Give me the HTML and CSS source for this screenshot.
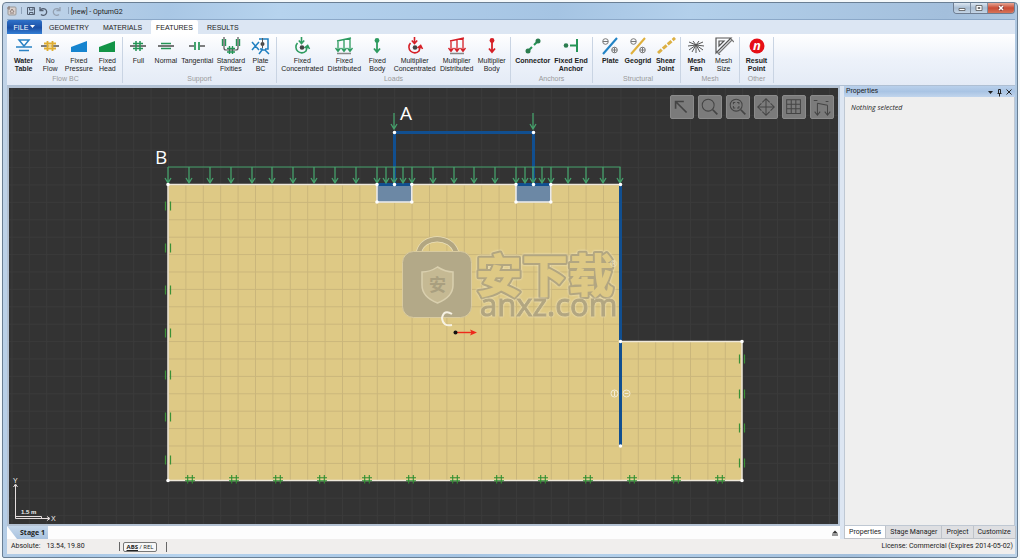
FILE: index.html
```html
<!DOCTYPE html>
<html lang="en">
<head>
<meta charset="utf-8">
<title>[new] - OptumG2</title>
<link rel="stylesheet" href="styles.css">
</head>
<body>
<svg class="defs" aria-hidden="true">
  <defs>
    <g id="arrow"><path d="M0 -17V-1M-3 -6L0 -1L3 -6" fill="none" stroke="#45a06b" stroke-width="1.3"/></g>
    <g id="slider" stroke="#3a9136" stroke-width="1.2"><path d="M-2.5 -4.500V4.500M2.500 -4.500V4.500"/></g>
    <g id="fix" stroke="#2f9030" stroke-width="1.1"><path d="M-5 -1.300H5M-5 1.700H5M-2.300 -4V4.500M2.300 -4V4.500"/></g>
    <g id="concentrated" fill="none" stroke-width="1.6"><path d="M5.500 6A5.500 5.500 0 1 0 14 14L15.500 9M12.500 11L15.700 8.500L17.500 12M9.500 0V6M6.800 3.500L9.500 6.500L12.200 3.500"/><circle cx="10" cy="10.500" r="2.300" fill="#444" stroke="none"/></g>
    <g id="distributed" fill="none" stroke-width="1.300"><path d="M3 4L17 1M4 4V14M10 3V14M16 1V14M1.500 11L4 14.500L6.500 11M7.500 11L10 14.500L12.500 11M13.500 11L16 14.500L18.500 11"/><path d="M3 16.500H17" stroke="#888" stroke-width="1.500"/></g>
    <g id="bodyload"><circle cx="10" cy="3.500" r="2.400" stroke="none"/><path d="M10 4V14M7 11.500L10 15L13 11.500" fill="none" stroke-width="1.800"/></g>
  </defs>
</svg>
<div class="window">
  <header class="titlebar">
    <svg class="quick" viewBox="0 0 64 14" aria-hidden="true">
      <rect x="1" y="3" width="8" height="8" rx="1" fill="#d9d0cc" stroke="#999"/><path d="M3 8l2-3 2 3M3 9h4M0 4h3M2 2v4" stroke="#8a7c78" fill="none"/>
      <path d="M14.500 3v7M61.500 3v7" stroke="#8fa3bb"/>
      <g fill="none" stroke="#535f70"><path d="M20.500 3.500h7v7h-7zM22.500 3.500v2.500h3.500v-2.500M22.500 10.500V8.500h3.500v2"/><path d="M33 3v3.500h3.500M33.500 6A3.400 3.400 0 1 1 34 10.500" stroke-width="1.300"/><path d="M53 3v3.500h-3.500M52.500 6A3.400 3.400 0 1 0 52 10.500" stroke="#94a1b1" stroke-width="1.300"/></g>
    </svg>
    <h1>[new] - OptumG2</h1>
    <div class="winbuttons">
      <button aria-label="Minimize"><svg viewBox="0 0 16 10"><path d="M5 5.500h6v2h-6z" fill="#fff" stroke="#555" stroke-width=".8"/></svg></button>
      <button aria-label="Maximize"><svg viewBox="0 0 16 10"><path d="M5 2.500h6v5h-6zM7 4.500h2v1h-2z" fill="#fff" stroke="#555" stroke-width=".8"/></svg></button>
      <button class="close" aria-label="Close"><svg viewBox="0 0 26 10"><path d="M11 3l4 4M15 3l-4 4" stroke="#733" stroke-width="3"/><path d="M11 3l4 4M15 3l-4 4" stroke="#fff" stroke-width="1.600"/></svg></button>
    </div>
  </header>
  <div class="client">
    <nav class="menu"><button class="file">FILE <svg viewBox="0 0 5 4"><path d="M0 0h5l-2.500 3z" fill="#fff"/></svg></button><button>GEOMETRY</button><button>MATERIALS</button><button class="active">FEATURES</button><button>RESULTS</button></nav>
    <div class="ribbon">
      <section class="group g-flow"><div class="tools">
        <button class="strong"><svg viewBox="0 0 20 18"><path d="M5 3h10l-5 6z" fill="#fff" stroke="#2a82c4" stroke-width="1.500"/><path d="M2 10h16M5 13.500h10" stroke="#2a82c4" stroke-width="1.500"/></svg><span>Water<br>Table</span></button>
        <button><svg viewBox="0 0 20 18"><path d="M1 9h18" stroke="#555" stroke-width="1.500"/><path d="M4 6.500h12M4 11.500h12M7.500 4v10M12.500 4v10" stroke="#dfad31" stroke-width="1.800"/><path d="M8.500 7.500h3v3h-3z" fill="#f7d988"/></svg><span>No<br>Flow</span></button>
        <button><svg viewBox="0 0 20 18"><path d="M2 10L18 4v11H2z" fill="#1684cf"/></svg><span>Fixed<br>Pressure</span></button>
        <button><svg viewBox="0 0 20 18"><path d="M2 10L18 4v11H2z" fill="#129447"/></svg><span>Fixed<br>Head</span></button>
      </div><h2>Flow BC</h2></section>
      <section class="group g-support"><div class="tools">
        <button><svg viewBox="0 0 20 18"><path d="M2 9h16" stroke="#555" stroke-width="1.600"/><path d="M5 6.500h10M5 11.500h10M8 4v10M12 4v10" stroke="#249456" stroke-width="1.500"/></svg><span>Full</span></button>
        <button><svg viewBox="0 0 20 18"><path d="M2 9h16" stroke="#555" stroke-width="1.600"/><path d="M5 6.500h10M5 11.500h10" stroke="#249456" stroke-width="1.700"/></svg><span>Normal</span></button>
        <button><svg viewBox="0 0 20 18"><path d="M2 9h5M13 9h5" stroke="#555" stroke-width="1.600"/><path d="M8 5v8M12 5v8" stroke="#249456" stroke-width="1.700"/></svg><span>Tangential</span></button>
        <button><svg viewBox="0 0 20 18"><g fill="none" stroke="#249456" stroke-width="1.400"><path d="M1.500 2v7M4.500 2v7M15.500 2v7M18.500 2v7M6 11.500h8M6 15h8M8.500 9v8M11.500 9v8"/></g><path d="M3 0v11q0 2 2 2h10q2 0 2-2V0" fill="none" stroke="#555" stroke-width="1.200"/></svg><span>Standard<br>Fixities</span></button>
        <button><svg viewBox="0 0 20 18"><path d="M8 2h9v10h-3M1 5l7 8M8 5l-7 8M9 12h3M8 17l3-4h3l4 4" fill="none" stroke="#1f7fc0" stroke-width="1.500"/><circle cx="11.500" cy="7" r="2" fill="#444"/><path d="M11.500 1v6M11.500 7v4" stroke="#555"/></svg><span>Plate<br>BC</span></button>
      </div><h2>Support</h2></section>
      <section class="group g-loads"><div class="tools">
        <button class="green"><svg viewBox="0 0 20 18"><use href="#concentrated"/></svg><span>Fixed<br>Concentrated</span></button>
        <button class="green"><svg viewBox="0 0 20 18"><use href="#distributed"/></svg><span>Fixed<br>Distributed</span></button>
        <button class="green"><svg viewBox="0 0 20 18"><use href="#bodyload"/></svg><span>Fixed<br>Body</span></button>
        <button class="red"><svg viewBox="0 0 20 18"><use href="#concentrated"/></svg><span>Multiplier<br>Concentrated</span></button>
        <button class="red"><svg viewBox="0 0 20 18"><use href="#distributed"/></svg><span>Multiplier<br>Distributed</span></button>
        <button class="red"><svg viewBox="0 0 20 18"><use href="#bodyload"/></svg><span>Multiplier<br>Body</span></button>
      </div><h2>Loads</h2></section>
      <section class="group g-anchors"><div class="tools">
        <button class="strong"><svg viewBox="0 0 20 18"><path d="M5 14l4-4M11 8l4-4" stroke="#249456" stroke-width="2"/><circle cx="5" cy="14" r="2.500" fill="#2b7d50"/><circle cx="15" cy="4" r="2.500" fill="#2b7d50"/></svg><span>Connector</span></button>
        <button class="strong"><svg viewBox="0 0 20 18"><circle cx="5" cy="8.500" r="2.300" fill="#2b7d50"/><path d="M9 8.500h7M16 2v13" stroke="#249456" stroke-width="2"/></svg><span>Fixed End<br>Anchor</span></button>
      </div><h2>Anchors</h2></section>
      <section class="group g-structural"><div class="tools">
        <button class="strong"><svg viewBox="0 0 20 18"><path d="M3 17L17 1" stroke="#2283c5" stroke-width="2"/><g fill="none" stroke="#777" stroke-width="1"><circle cx="5.500" cy="4.500" r="2.800"/><path d="M3 4.500h5M12 13h5M14.500 10.500v5"/><circle cx="14.500" cy="13" r="2.800"/></g></svg><span>Plate</span></button>
        <button class="strong"><svg viewBox="0 0 20 18"><path d="M3 17L17 1" stroke="#dfb03c" stroke-width="2"/><g fill="none" stroke="#777" stroke-width="1"><circle cx="5.500" cy="4.500" r="2.800"/><path d="M3 4.500h5M12 13h5M14.500 10.500v5"/><circle cx="14.500" cy="13" r="2.800"/></g></svg><span>Geogrid</span></button>
        <button class="strong"><svg viewBox="0 0 20 18"><path d="M2 16L19 1" stroke="#dcb044" stroke-width="3" stroke-dasharray="5 1.500"/></svg><span>Shear<br>Joint</span></button>
      </div><h2>Structural</h2></section>
      <section class="group g-mesh"><div class="tools">
        <button class="strong"><svg viewBox="0 0 20 18"><path d="M10 8L2 9M10 8L3 13M10 8L6 15M10 8v8M10 8l4 7M10 8l7 5M10 8l8 1M10 8L3 5M10 8l7-3M10 8L7 4M10 8l3-4" stroke="#555" stroke-width="1"/></svg><span>Mesh<br>Fan</span></button>
        <button><svg viewBox="0 0 20 18"><path d="M2 1h15L2 16zM5 4v5l5-5z" fill="none" stroke="#555" stroke-width="1.200"/><path d="M4 17L18 3M3 15l3 3M17 2l3 3" stroke="#777" stroke-width="1.200"/></svg><span>Mesh<br>Size</span></button>
      </div><h2>Mesh</h2></section>
      <section class="group g-other"><div class="tools">
        <button class="strong"><svg viewBox="0 0 20 18"><circle cx="10" cy="9" r="7.500" fill="#e60f17"/><text x="10" y="13" class="n">n</text></svg><span>Result<br>Point</span></button>
      </div><h2>Other</h2></section>
    </div>
    <div class="work">
      <main>
        <div class="canvas">
          <svg class="drawing" viewBox="9 88 829 436" role="img" aria-label="Model">
            <defs>
              <pattern id="dark" x="168" y="184.500" width="17.400" height="17.400" patternUnits="userSpaceOnUse"><path d="M0 .5H17.400M.5 0V17.400" stroke="#3a3a3a"/></pattern>
              <pattern id="sand" x="168" y="184.500" width="17.400" height="17.400" patternUnits="userSpaceOnUse"><path d="M0 .5H17.400M.5 0V17.400" stroke="#cab67b"/></pattern>
            </defs>
            <rect x="9" y="88" width="829" height="436" fill="#333"/>
            <rect x="9" y="88" width="829" height="436" fill="url(#dark)"/>
            <path d="M168 184.500H620.500V341.500H742V480.500H168z" fill="#dec985"/>
            <path d="M168 184.500H620.500V341.500H742V480.500H168z" fill="url(#sand)" stroke="#eee8da" stroke-width="1.500"/>
            <g fill="#6c88a5" stroke="#eee" stroke-width="1.500"><path d="M377 184.500h34.800V202H377z"/><path d="M516 184.500h34.800V202H516z"/></g>
            <g stroke="#114f90" stroke-width="3" fill="none"><path d="M394.500 184V132.500H533.500V184M377 184.500h35M516 184.500h35M620.500 184V446"/></g>
            <path d="M168 167H620.500" stroke="#45a06b"/>
            <g>
              <use href="#arrow" x="168" y="184"/><use href="#arrow" x="189" y="184"/><use href="#arrow" x="210" y="184"/><use href="#arrow" x="231" y="184"/><use href="#arrow" x="252" y="184"/><use href="#arrow" x="272" y="184"/><use href="#arrow" x="293" y="184"/><use href="#arrow" x="314" y="184"/><use href="#arrow" x="335" y="184"/><use href="#arrow" x="356" y="184"/>
              <use href="#arrow" x="377" y="184"/><use href="#arrow" x="386" y="184"/><use href="#arrow" x="394" y="184"/><use href="#arrow" x="403" y="184"/><use href="#arrow" x="412" y="184"/><use href="#arrow" x="433" y="184"/><use href="#arrow" x="454" y="184"/><use href="#arrow" x="474" y="184"/><use href="#arrow" x="495" y="184"/>
              <use href="#arrow" x="516" y="184"/><use href="#arrow" x="525" y="184"/><use href="#arrow" x="533" y="184"/><use href="#arrow" x="542" y="184"/><use href="#arrow" x="551" y="184"/><use href="#arrow" x="568" y="184"/><use href="#arrow" x="586" y="184"/><use href="#arrow" x="603" y="184"/><use href="#arrow" x="620" y="184"/>
              <use href="#arrow" x="394" y="130"/><use href="#arrow" x="533" y="130"/>
            </g>
            <g>
              <use href="#slider" x="168" y="206"/><use href="#slider" x="168" y="248"/><use href="#slider" x="168" y="290"/><use href="#slider" x="168" y="333"/><use href="#slider" x="168" y="375"/><use href="#slider" x="168" y="417"/><use href="#slider" x="168" y="460"/>
              <use href="#slider" x="742" y="359"/><use href="#slider" x="742" y="394"/><use href="#slider" x="742" y="428"/><use href="#slider" x="742" y="463"/>
            </g>
            <g>
              <use href="#fix" x="190" y="479"/><use href="#fix" x="234" y="479"/><use href="#fix" x="278" y="479"/><use href="#fix" x="322" y="479"/><use href="#fix" x="367" y="479"/><use href="#fix" x="411" y="479"/><use href="#fix" x="455" y="479"/><use href="#fix" x="499" y="479"/><use href="#fix" x="543" y="479"/><use href="#fix" x="588" y="479"/><use href="#fix" x="632" y="479"/><use href="#fix" x="676" y="479"/><use href="#fix" x="720" y="479"/>
            </g>
            <path d="M168 184.500h0M168 480.500h0M377 184.500h0M411.800 184.500h0M377 202h0M411.800 202h0M394.500 184.500h0M394.500 132.500h0M533.500 132.500h0M533.500 184.500h0M516 184.500h0M550.800 184.500h0M516 202h0M550.800 202h0M620.500 184.500h0M620.500 341.500h0M742 341.500h0M742 480.500h0M620.500 446h0" stroke="#fff" stroke-width="3.600" stroke-linecap="round"/>
            <g fill="none" stroke="#f4ecd5"><circle cx="614.500" cy="393.500" r="3.500"/><circle cx="626.500" cy="393.500" r="3.500"/><path d="M614.500 391v5M624.500 393.500h4"/></g>
            <g>
              <path d="M419 252C423 235 451 235 456 252" fill="none" stroke="#eadfb9" stroke-width="6"/>
              <path d="M419 252C423 235 451 235 456 252" fill="none" stroke="#b2a681" stroke-width="4.500"/>
              <rect x="402.500" y="251.500" width="69" height="66" rx="11" fill="#b3a988" stroke="#d9cba0"/>
              <path d="M437.500 267q8 5 15.500 5v13q0 12-15.500 18q-15.500-6-15.500-18v-13q8 0 15.500-5z" fill="#c5b993" stroke="#d9cfae" stroke-width="1.500"/>
              <text x="437.500" y="291" class="shieldtext">安</text>
              <text x="476" y="292" class="cjk">安下载</text>
              <text x="480" y="316" class="latin">anxz.com</text>
              <text x="610" y="267" class="reg">®</text>
            </g>
            <text x="400" y="120" class="letter">A</text><text x="155" y="164" class="letter">B</text><path d="M452 314Q444 309 442 318Q443 327 452 325" fill="none" stroke="#f7f2e3" stroke-width="2"/>
            <path d="M456 332.500H474" stroke="#ee2a1c" stroke-width="1.400"/><path d="M470 329.500L477 332.500L470 335.500L471.500 332.500z" fill="#ee2a1c"/><circle cx="455.500" cy="332.500" r="2" fill="#111"/>
            <g fill="none" stroke="#e5dede"><path d="M15.500 485V518.500H49M13.500 487L15.500 484L17.500 487M47 516.500L50 518.500L47 520.500M15.500 516.500H41.500V518.500"/></g>
            <text x="13" y="483" class="axis">Y</text><text x="51" y="521" class="axis">X</text><text x="21" y="514" class="scale">1.5 m</text>
          </svg>
          <div class="viewtools">
            <button aria-label="Select"><svg viewBox="0 0 24 24"><path d="M5 14V6h9M5 6l12 12" class="bold"/></svg></button>
            <button aria-label="Zoom"><svg viewBox="0 0 24 24"><circle cx="10" cy="10" r="6.500"/><path d="M15 15l5 5" class="bold"/></svg></button>
            <button aria-label="Zoom extents"><svg viewBox="0 0 24 24"><circle cx="10" cy="10" r="6.500"/><path d="M7 9V7h2M11 7h2v2M13 11v2h-2M9 13H7v-2"/><path d="M15 15l5 5" class="bold"/></svg></button>
            <button aria-label="Pan"><svg viewBox="0 0 24 24"><path d="M12 4v16M4 12h16M8 7l4-4 4 4M8 17l4 4 4-4M7 8l-4 4 4 4M17 8l4 4-4 4"/></svg></button>
            <button aria-label="Grid"><svg viewBox="0 0 24 24"><path d="M4 4h15v15H4zM9 4v15M14 4v15M4 9h15M4 14h15"/></svg></button>
            <button aria-label="Show loads"><svg viewBox="0 0 24 24"><path d="M7 8l11 2M7 8v12M18 10v10M4 17l3 4 3-4M15 17l3 4 3-4M3 5h4M16 6h3"/></svg></button>
          </div>
        </div>
        <div class="stages"><button>Stage 1</button><svg viewBox="0 0 6 6" aria-hidden="true"><path d="M0 3.500L3 .5L6 3.500zM0 4.500h6v1H0z" fill="#333"/></svg></div>
      </main>
      <aside>
        <div class="panelhead"><h2>Properties</h2><svg viewBox="0 0 26 10" aria-hidden="true"><path d="M1 4h5l-2.500 3z" fill="#222"/><path d="M10.500 6.500h4M11.500 2.500h2v4h-2zM12.500 6.500v3M19.500 2.500l5 5M24.500 2.500l-5 5" stroke="#222" fill="none"/></svg></div>
        <div class="panelbody"><p>Nothing selected</p></div>
        <div class="paneltabs"><button class="active">Properties</button><button>Stage Manager</button><button>Project</button><button>Customize</button></div>
      </aside>
    </div>
    <footer><div class="coords"><span>Absolute:</span><span>13.54, 19.80</span></div><div class="mode"><button><b>ABS</b> / REL</button></div><p>License: Commercial (Expires 2014-05-02)</p></footer>
  </div>
</div>
</body>
</html>
```
FILE: styles.css
```css
* { box-sizing: border-box; }
body { margin: 0; padding: 2px; background: #f4f8fa; font: 7px/9px Roboto, "Open Sans", sans-serif; color: #222; }
h1, h2, p { margin: 0; font: inherit; }
button { font: inherit; color: inherit; margin: 0; padding: 0; border: 0; background: none; white-space: nowrap; }
svg { display: block; }
.defs { width: 0; height: 0; position: absolute; }
.window { min-height: calc(100vh - 4px); display: flex; flex-direction: column; border: 1px solid #6a7f94; border-radius: 4px 4px 2px 2px; background: linear-gradient(100deg, #c3d5e8, #a9c7e5 15%, #b6d3ee 25%, #a5c4e3 50%, #b3d0eb 62%, #a3bfdc 85%, #bdd3e8); padding: 0 2px 3px 4px; }
.titlebar { display: flex; height: 16px; align-items: center; }
.quick { width: 64px; height: 14px; }
.titlebar h1 { margin-top: 2px; }
.winbuttons { margin-left: auto; align-self: flex-start; display: flex; border: 1px solid #6e7d91; border-top: 0; border-radius: 0 0 4px 4px; overflow: hidden; }
.winbuttons button { background: linear-gradient(#dce7f2, #a9bdd2 50%, #c4d5e6); border-right: 1px solid #7e8ea1; }
.winbuttons svg { width: 16px; height: 10px; }
.winbuttons .close { border: 0; background: linear-gradient(#e7a795, #c94c35 50%, #d67459); }
.winbuttons .close svg { width: 26px; }
.client { flex: 1; display: flex; flex-direction: column; background: #dde6f2; border-top: 1px solid #8ba8c8; }
.menu { display: flex; height: 14px; background: #dce6f3; font-family: "Liberation Sans", sans-serif; }
.menu button { padding: 0 7px; }
.menu .file { width: 35px; padding: 0; display: flex; align-items: center; justify-content: center; gap: 2px; color: #fff; background: linear-gradient(#2f72c9, #1b4fa5 55%, #347fd5); border-radius: 2px 2px 0 0; }
.file svg { width: 5px; height: 4px; }
.menu .active { background: #fff; border-radius: 2px 2px 0 0; padding: 0 5px; margin: 0 2px; }
.ribbon { display: flex; padding: 3px 2px 2px; height: 52px; background: linear-gradient(#fff, #edf2fa 50%, #e4ebf6); border-bottom: 1px solid #aebfd3; font: 7px/8px "Liberation Sans", sans-serif; }
.group { display: flex; flex-direction: column; border-right: 1px solid #c9d4e3; }
.group h2 { color: #999; text-align: center; }
.tools { display: flex; flex: 1; justify-content: space-evenly; }
.tools button { display: flex; flex-direction: column; align-items: center; min-width: 24px; gap: 2px; }
.tools svg { width: 20px; height: 18px; }
.strong { font-weight: bold; }
.green svg { stroke: #2e9b60; fill: #2e9b60; }
.red svg { stroke: #d62027; fill: #d62027; }
.n { font: italic bold 13px "Open Sans", sans-serif; fill: #fff; text-anchor: middle; }
.g-flow { width: 114px; }
.g-support { width: 154px; }
.g-loads { width: 234px; }
.g-anchors { width: 82px; }
.g-structural { width: 88px; padding-left: 3px; }
.g-mesh { width: 59px; }
.g-other { width: 34px; }
.work { flex: 1; display: flex; gap: 4px; min-height: 0; }
main { flex: 1; min-width: 0; display: flex; flex-direction: column; background: #fdfdfd; }
.canvas { flex: 1; min-height: 0; position: relative; border: 2px solid #b3c1d2; background: #333; }
.drawing { position: absolute; inset: 0; width: 100%; height: 100%; }
.viewtools { position: absolute; top: 7px; right: 4px; display: flex; gap: 4px; }
.viewtools button { width: 24px; height: 24px; background: #7b7b7b; border: 1px solid #8b8b8b; border-radius: 2px; }
.viewtools svg { width: 22px; height: 22px; fill: none; stroke: #444; stroke-width: 1.1; }
.viewtools .bold { stroke-width: 1.8; }
.letter { font: 19px "Open Sans", sans-serif; fill: #fff; }
.axis { font: 7px "Liberation Sans", sans-serif; fill: #eee; }
.scale { font: bold 6px "Liberation Sans", sans-serif; fill: #eee; }
.cjk { font: 900 46px "Noto Sans CJK SC", sans-serif; stroke-linejoin: round; fill: #dec985; stroke: #b2a681; stroke-width: 4; paint-order: stroke; filter: drop-shadow(0 0 1px #f3e9c8); }
.latin { font: 31px "Open Sans", sans-serif; fill: #b2a681; stroke: #b2a681; stroke-width: 1; filter: drop-shadow(0 0 1px #f3e9c8); }
.shieldtext { font: bold 17px "Noto Sans CJK SC", sans-serif; fill: #a99f7f; text-anchor: middle; }
.reg { font: 9px "Open Sans", sans-serif; fill: #eee3bf; }
.stages { display: flex; height: 13px; justify-content: space-between; align-items: center; padding-right: 2px; }
.stages button { align-self: stretch; padding: 0 3px 1px 13px; font-family: "Open Sans", sans-serif; font-weight: bold; background: linear-gradient(#c6d8eb, #a8c2df); clip-path: polygon(0 0, 100% 0, 100% 100%, 10px 100%); }
.stages svg { width: 6px; height: 6px; }
aside { width: 171px; display: flex; flex-direction: column; }
.panelhead { display: flex; height: 11px; justify-content: space-between; align-items: center; padding: 0 2px; background: linear-gradient(#b9d0eb, #a9c4e4 50%, #c1d5ed); }
.panelhead svg { width: 26px; height: 10px; }
.panelbody { flex: 1; background: #efefef; border: 1px solid #bfc8d3; border-width: 0 1px 1px; padding: 6px; }
.panelbody p { font-family: "Open Sans", sans-serif; font-style: italic; }
.paneltabs { display: flex; height: 13px; background: #f0f0f0; }
.paneltabs button { padding: 0 4px; background: #dedfe2; border: 1px solid #bfc3c9; border-width: 0 1px 1px 0; }
.paneltabs .active { background: #fff; border-left-width: 1px; }
footer { display: flex; height: 15px; align-items: center; background: #f0eeed; padding: 0 2px 0 4px; }
.coords { display: flex; gap: 6px; width: 109px; border-right: 1px solid #666; }
.mode { padding: 0 9px 0 3px; border-right: 1px solid #666; }
.mode button { display: block; width: 34px; border: 1px solid #777; border-radius: 2px; background: #f7f7f7; font: 6px/8px "Open Sans", sans-serif; }
.mode b { text-decoration: underline; }
footer p { margin-left: auto; }
```
